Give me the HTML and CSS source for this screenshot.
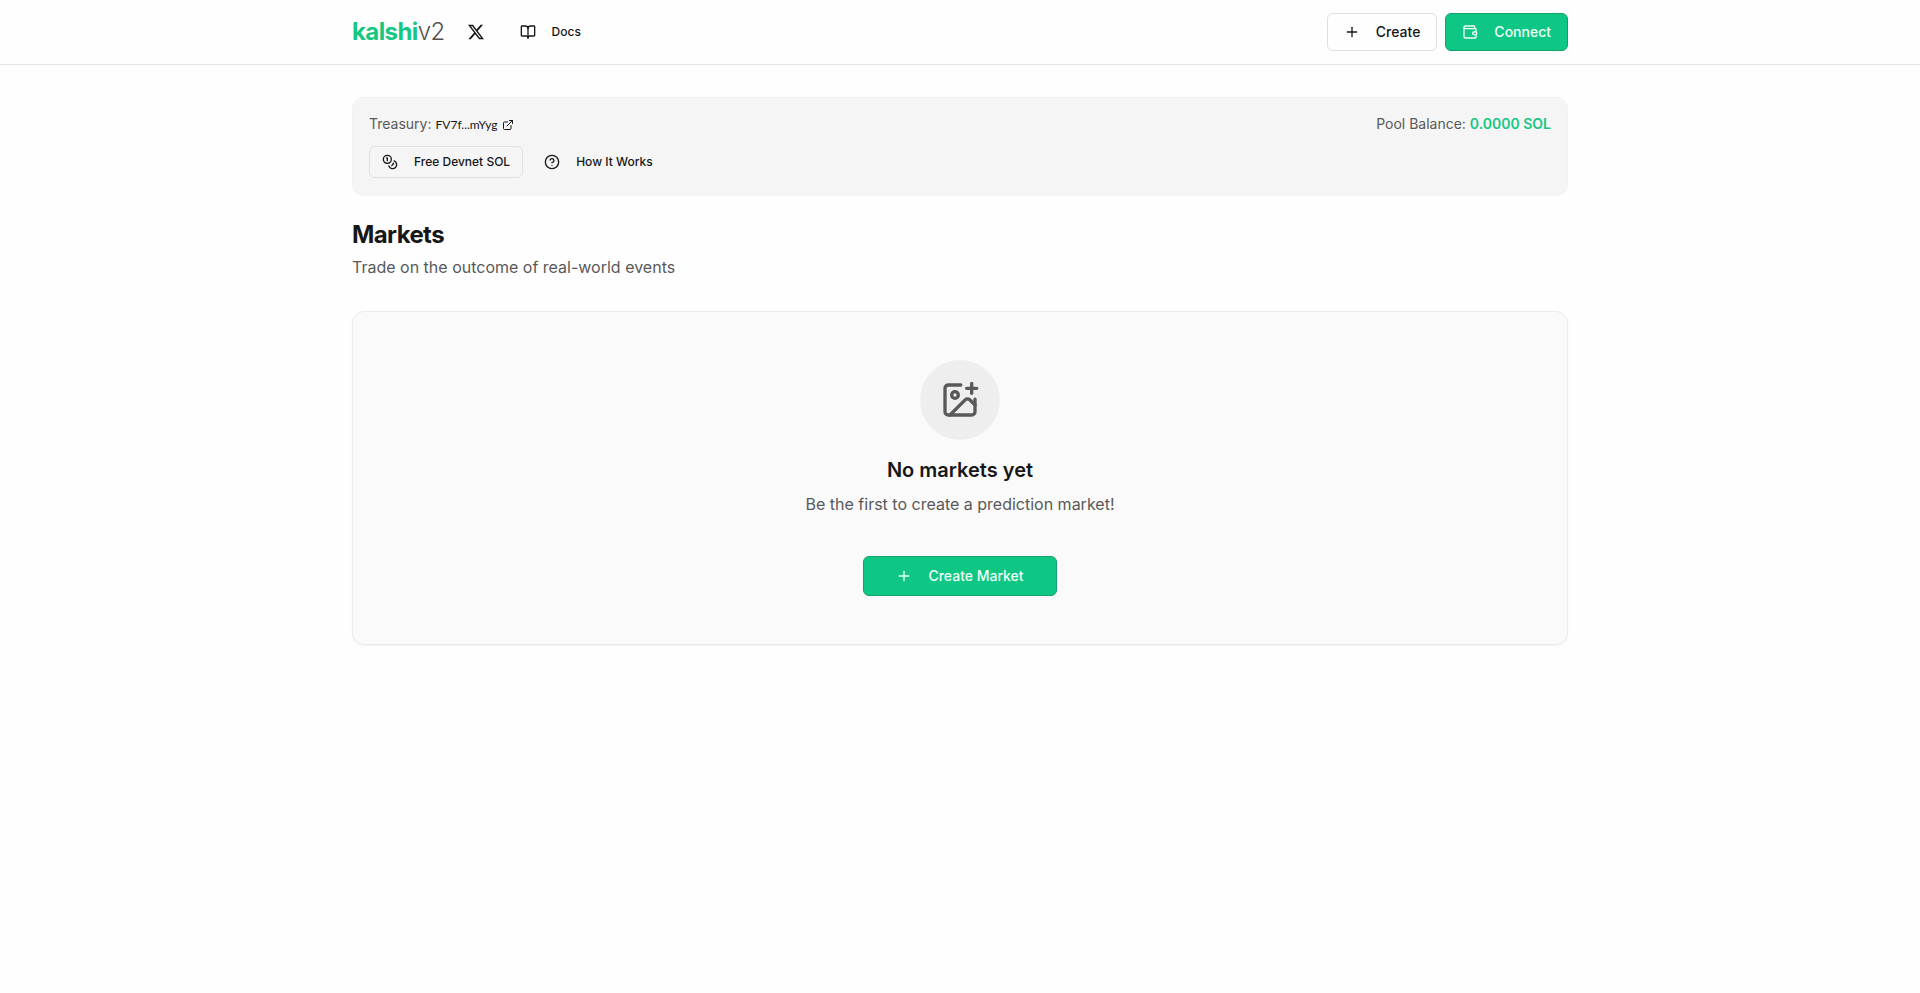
FILE: index.html
```html
<!DOCTYPE html>
<html lang="en">

<head>
    <meta charset="UTF-8" />
    <meta name="viewport" content="width=device-width, initial-scale=1.0" />
    <title>kalshiv2</title>
    <link rel="stylesheet" href="styles.css">
</head>

<body>
    <header class="header">
        <div class="container header-inner">
            <nav class="nav">
                <a href="#" class="logo">kalshi<span>v2</span></a>
                <a href="#" class="btn btn-sm btn-ghost" aria-label="X">
                    <svg class="icon-x" viewBox="0 0 24 24">
                        <path d="M18.901 1.153h3.68l-8.04 9.19L24 22.846h-7.406l-5.8-7.584-6.638 7.584H.474l8.6-9.83L0 1.154h7.594l5.243 6.932ZM17.61 20.644h2.039L6.486 3.24H4.298Z" />
                    </svg>
                </a>
                <a href="#" class="btn btn-sm btn-ghost">
                    <svg class="icon" viewBox="0 0 24 24">
                        <path d="M12 7v14" />
                        <path d="M3 18a1 1 0 0 1-1-1V4a1 1 0 0 1 1-1h5a4 4 0 0 1 4 4 4 4 0 0 1 4-4h5a1 1 0 0 1 1 1v13a1 1 0 0 1-1 1h-6a3 3 0 0 0-3 3 3 3 0 0 0-3-3z" />
                    </svg>
                    Docs
                </a>
            </nav>
            <div class="actions">
                <button class="btn btn-outline">
                    <svg class="icon" viewBox="0 0 24 24">
                        <path d="M5 12h14" />
                        <path d="M12 5v14" />
                    </svg>
                    Create
                </button>
                <button class="btn btn-primary">
                    <svg class="icon" viewBox="0 0 24 24">
                        <path d="M19 7V4a1 1 0 0 0-1-1H5a2 2 0 0 0 0 4h15a1 1 0 0 1 1 1v4h-3a2 2 0 0 0 0 4h3a1 1 0 0 0 1-1v-2a1 1 0 0 0-1-1" />
                        <path d="M3 5v14a2 2 0 0 0 2 2h15a1 1 0 0 0 1-1v-4" />
                    </svg>
                    Connect
                </button>
            </div>
        </div>
    </header>

    <main class="container main">
        <section class="treasury">
            <div class="treasury-row">
                <div class="treasury-address">
                    Treasury:
                    <a href="#">
                        FV7f...mYyg
                        <svg class="icon icon-small" viewBox="0 0 24 24">
                            <path d="M15 3h6v6" />
                            <path d="M10 14 21 3" />
                            <path d="M18 13v6a2 2 0 0 1-2 2H5a2 2 0 0 1-2-2V8a2 2 0 0 1 2-2h6" />
                        </svg>
                    </a>
                </div>
                <div>Pool Balance: <strong>0.0000 SOL</strong></div>
            </div>
            <div class="treasury-buttons">
                <button class="btn btn-sm btn-outline">
                    <svg class="icon" viewBox="0 0 24 24">
                        <circle cx="8" cy="8" r="6" />
                        <path d="M18.09 10.37A6 6 0 1 1 10.34 18" />
                        <path d="M7 6h1v4" />
                        <path d="m16.71 13.88.7.71-2.82 2.82" />
                    </svg>
                    Free Devnet SOL
                </button>
                <button class="btn btn-sm btn-ghost">
                    <svg class="icon" viewBox="0 0 24 24">
                        <circle cx="12" cy="12" r="10" />
                        <path d="M9.09 9a3 3 0 0 1 5.83 1c0 2-3 3-3 3" />
                        <path d="M12 17h.01" />
                    </svg>
                    How It Works
                </button>
            </div>
        </section>

        <div class="heading">
            <h1>Markets</h1>
            <p>Trade on the outcome of real-world events</p>
        </div>

        <section class="empty">
            <div class="empty-icon">
                <svg class="icon icon-large" viewBox="0 0 24 24">
                    <path d="M16 5h6" />
                    <path d="M19 2v6" />
                    <path d="M21 11.5V19a2 2 0 0 1-2 2H5a2 2 0 0 1-2-2V5a2 2 0 0 1 2-2h7.5" />
                    <path d="m21 15-3.086-3.086a2 2 0 0 0-2.828 0L6 21" />
                    <circle cx="9" cy="9" r="2" />
                </svg>
            </div>
            <h2>No markets yet</h2>
            <p>Be the first to create a prediction market!</p>
            <button class="btn btn-lg btn-primary">
                <svg class="icon" viewBox="0 0 24 24">
                    <path d="M5 12h14" />
                    <path d="M12 5v14" />
                </svg>
                Create Market
            </button>
        </section>
    </main>
</body>

</html>
```
FILE: styles.css
```css
* {
    box-sizing: border-box;
}

body {
    margin: 0;
    font-family: Inter, sans-serif;
    font-size: 16px;
    line-height: 24px;
    background-color: #fefefe;
    color: #171717;
}

h1,
h2,
p {
    margin: 0;
}

a {
    color: inherit;
    text-decoration: none;
}

.container {
    max-width: 1280px;
    margin: 0 auto;
    padding: 0 32px;
}

.header {
    border-bottom: 1px solid #e5e5e5;
}

.header-inner {
    height: 64px;
    display: flex;
    justify-content: space-between;
    align-items: center;
}

.nav {
    display: flex;
    align-items: center;
    gap: 10px;
}

.logo {
    font-size: 24px;
    line-height: 32px;
    font-weight: 700;
    letter-spacing: -0.025em;
    color: #16c784;
}

.logo span {
    font-weight: 300;
    color: #525252;
}

.actions {
    display: flex;
    gap: 8px;
}

.btn {
    display: inline-flex;
    align-items: center;
    justify-content: center;
    gap: 16px;
    height: 38px;
    padding: 0 16px;
    border: 1px solid transparent;
    border-radius: 6px;
    background: none;
    color: #171717;
    font-family: inherit;
    font-size: 14px;
    font-weight: 500;
    line-height: 20px;
    white-space: nowrap;
    cursor: pointer;
}

.btn-sm {
    height: 32px;
    padding: 0 12px;
    font-size: 12px;
}

.btn-lg {
    height: 40px;
    padding: 0 32px;
}

.btn-outline {
    border-color: #e0e0e0;
}

.btn-ghost:hover,
.btn-outline:hover {
    background-color: #ededed;
}

.btn-primary {
    background-color: #0ec784;
    border-color: #12a26c;
    color: #f0fff8;
}

.btn-primary:hover {
    background-color: #12b87b;
}

.icon {
    width: 16px;
    height: 16px;
    flex-shrink: 0;
    fill: none;
    stroke: currentColor;
    stroke-width: 2;
    stroke-linecap: round;
    stroke-linejoin: round;
}

.icon-x {
    width: 16px;
    height: 16px;
    fill: currentColor;
}

.icon-small {
    width: 12px;
    height: 12px;
}

.icon-large {
    width: 40px;
    height: 40px;
}

.main {
    padding-top: 32px;
    padding-bottom: 32px;
}

.treasury {
    padding: 16px;
    border: 1px solid #f2f2f2;
    border-radius: 12px;
    background-color: #f5f5f5;
    box-shadow: 0 1px 2px rgba(0, 0, 0, 0.04);
}

.treasury-row {
    display: flex;
    justify-content: space-between;
    font-size: 14px;
    line-height: 20px;
    color: #595959;
}

.treasury-row strong {
    font-weight: 600;
    color: #16c784;
}

.treasury-address {
    display: flex;
    align-items: baseline;
    gap: 4px;
}

.treasury-address a {
    display: flex;
    align-items: center;
    gap: 4px;
    font-family: Lato, sans-serif;
    font-size: 12px;
    line-height: 16px;
    color: #171717;
}

.treasury-buttons {
    display: flex;
    gap: 8px;
    margin-top: 12px;
}

.heading {
    margin: 24px 0 32px;
}

.heading h1 {
    margin-bottom: 4px;
    font-size: 24px;
    line-height: 32px;
    font-weight: 700;
    letter-spacing: -0.025em;
}

.heading p,
.empty p {
    color: #595959;
}

.empty {
    display: flex;
    flex-direction: column;
    align-items: center;
    padding: 48px;
    border: 1px solid #ebebeb;
    border-radius: 12px;
    background-color: #fafafa;
    box-shadow: 0 1px 2px rgba(0, 0, 0, 0.05);
    text-align: center;
}

.empty-icon {
    display: flex;
    align-items: center;
    justify-content: center;
    width: 80px;
    height: 80px;
    margin-bottom: 16px;
    border-radius: 50%;
    background-color: #eeeeee;
    color: #595959;
}

.empty h2 {
    margin-bottom: 8px;
    font-size: 20px;
    line-height: 28px;
    font-weight: 600;
}

.empty .btn {
    margin-top: 40px;
}
```
